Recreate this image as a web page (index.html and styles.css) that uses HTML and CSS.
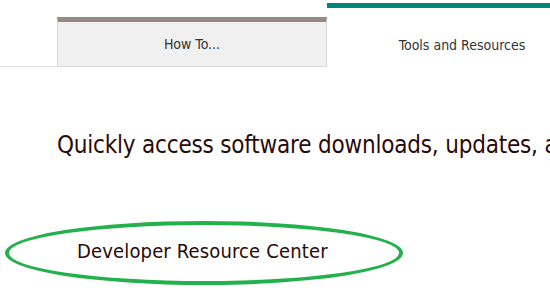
FILE: index.html
```html
<!DOCTYPE html>
<html lang="en">
<head>
    <meta charset="UTF-8">
    <meta name="viewport" content="width=device-width, initial-scale=1.0">
    <title>Tools and Resources</title>
    <link rel="stylesheet" href="styles.css">
</head>
<body>
    <div class="tabs">
        <div class="tab-gap"></div>
        <div class="tab">How To...</div>
        <div class="tab active">Tools and Resources</div>
    </div>

    <div class="content">
        <p class="intro">Quickly access software downloads, updates, and more</p>

        <div class="links">
            <a class="link highlighted" href="#">Developer Resource Center</a>
        </div>
    </div>
</body>
</html>
```

FILE: styles.css
```css
html {
    overflow: hidden;
}
body {
    margin: 0;
    font-family: Tahoma, "DejaVu Sans Condensed", "DejaVu Sans", sans-serif;
    background-color: #fff;
}
.tabs {
    display: flex;
    align-items: flex-end;
    height: 67px;
    white-space: nowrap;
}
.tab-gap {
    width: 57px;
    flex-shrink: 0;
    border-bottom: 1px solid #dedede;
}
.tab {
    width: 268px;
    flex-shrink: 0;
    height: 44px;
    border: 1px solid #d9d9d9;
    border-top: 5px solid #968a84;
    background-color: #f0f0f0;
    color: #333;
    font-size: 14px;
    text-align: center;
    line-height: 44px;
}
.tab.active {
    width: 270px;
    height: 59px;
    border-left: none;
    border-right: none;
    border-bottom: none;
    border-top-color: #00857a;
    background-color: #fff;
    line-height: 74px;
}
.content {
    padding-left: 57px;
    padding-bottom: 40px;
}
.intro {
    margin: 64px 0 0;
    font-size: 24px;
    letter-spacing: -0.2px;
    color: #2a0a0a;
    white-space: nowrap;
}
.links {
    margin-top: 80px;
}
.link {
    position: relative;
    display: inline-block;
    margin-left: 20px;
    font-size: 20px;
    letter-spacing: 0.15px;
    color: #2a0a0a;
    text-decoration: none;
}
/* hand-drawn ring round the link */
.link.highlighted::after {
    content: "";
    position: absolute;
    left: -72px;
    top: -18px;
    width: 390px;
    height: 56px;
    border: 4px solid #22b14c;
    border-radius: 50%;
}
```
